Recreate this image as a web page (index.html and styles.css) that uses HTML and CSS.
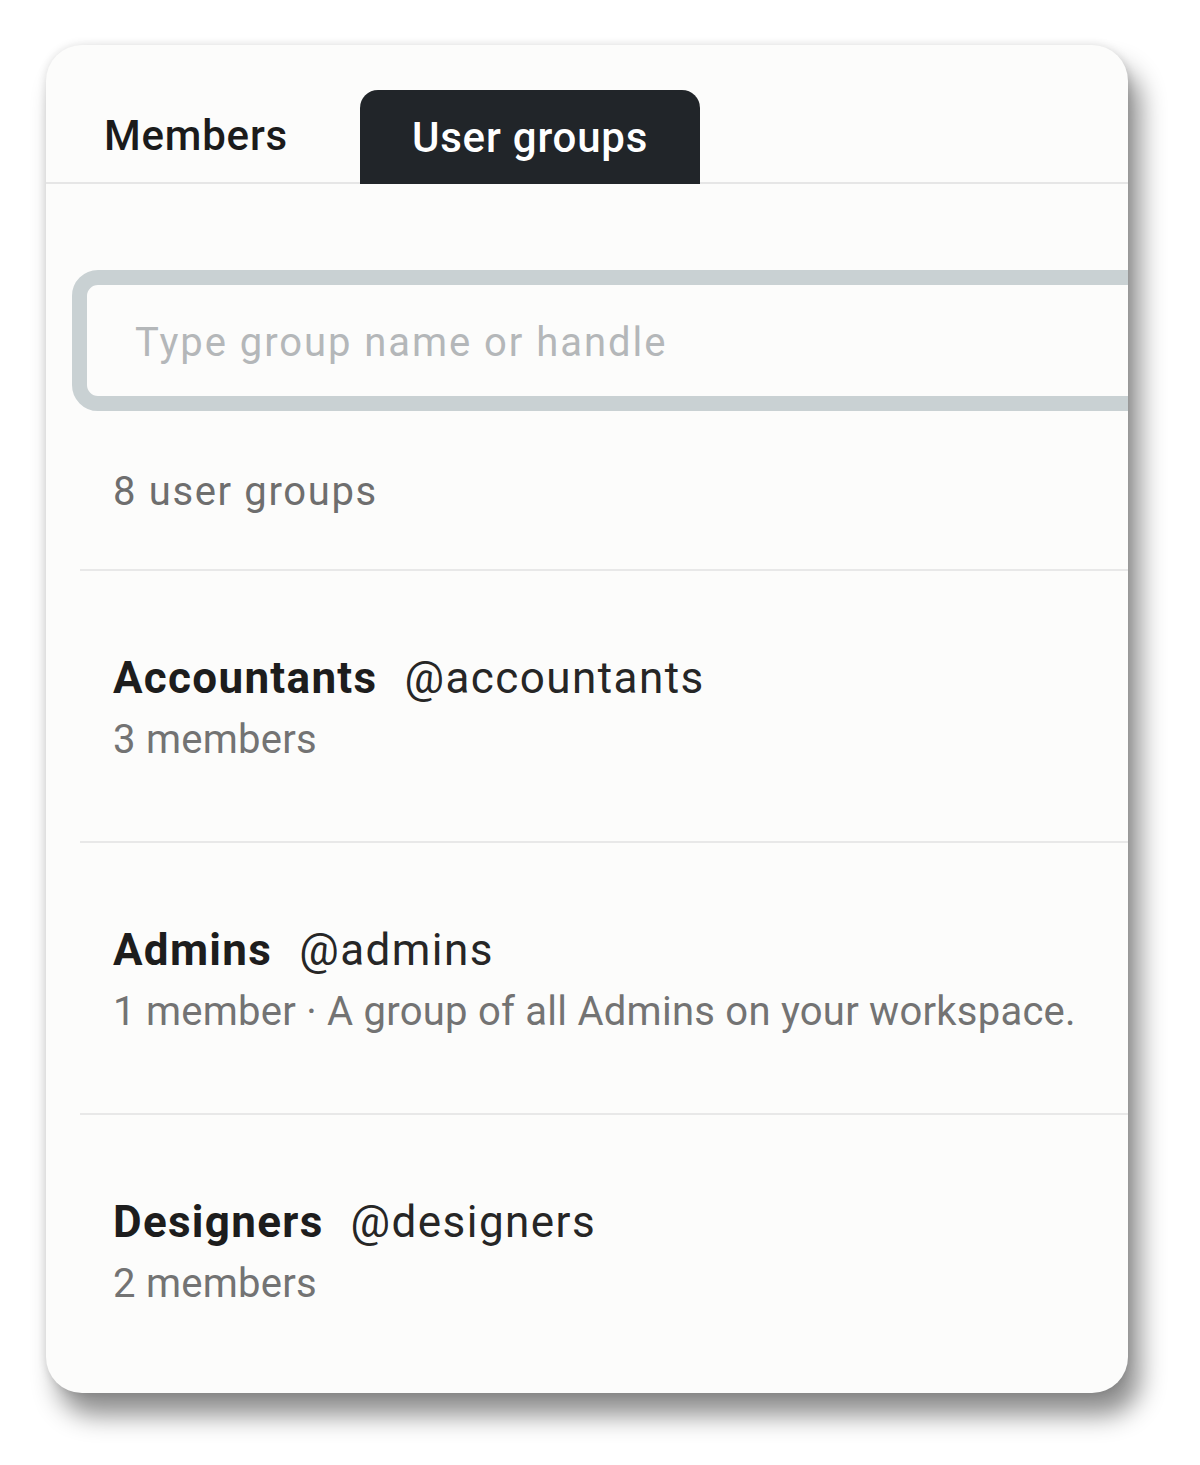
FILE: index.html
```html
<!DOCTYPE html>
<html lang="en">
<head>
<meta charset="utf-8">
<title>User groups</title>
<link rel="stylesheet" href="styles.css">
</head>
<body>
<div class="card">
  <div class="tabs">
    <div class="tab tab-plain">Members</div>
    <div class="tab tab-active">User groups</div>
  </div>
  <div class="search">
    <span class="placeholder">Type group name or handle</span>
  </div>
  <div class="count">8 user groups</div>
  <div class="list">
    <div class="item">
      <div class="title"><span class="name">Accountants</span><span class="handle">@accountants</span></div>
      <div class="sub">3 members</div>
    </div>
    <div class="item">
      <div class="title"><span class="name">Admins</span><span class="handle">@admins</span></div>
      <div class="sub">1 member · A group of all Admins on your workspace.</div>
    </div>
    <div class="item">
      <div class="title"><span class="name">Designers</span><span class="handle">@designers</span></div>
      <div class="sub">2 members</div>
    </div>
  </div>
</div>
</body>
</html>
```
FILE: styles.css
```css
html, body {
  margin: 0;
  padding: 0;
  background: #ffffff;
}
body {
  font-family: Roboto, "Liberation Sans", sans-serif;
  width: 1200px;
  height: 1465px;
  overflow: hidden;
}
.card {
  margin: 45px 0 0 46px;
  width: 1082px;
  height: 1348px;
  background: #fcfcfb;
  border-radius: 36px;
  overflow: hidden;
  box-shadow: 0 0 10px rgba(0,0,0,0.12), 12px 22px 26px rgba(0,0,0,0.45);
}
.tabs {
  display: flex;
  align-items: flex-end;
  height: 137px;
  padding-left: 58px;
  border-bottom: 2px solid #e6e6e6;
  box-sizing: content-box;
}
.tab {
  display: flex;
  align-items: center;
  font-size: 42px;
  font-weight: 500;
  letter-spacing: 0.8px;
}
.tab-plain {
  width: 256px;
  height: 94px;
  color: #1b1b1b;
}
.tab-active {
  width: 340px;
  height: 94px;
  justify-content: center;
  background: #212529;
  color: #ffffff;
  border-radius: 18px 18px 0 0;
  margin-bottom: -2px;
}
.search {
  margin: 86px 0 0 26px;
  width: 1120px;
  height: 141px;
  box-sizing: border-box;
  border: 15px solid #c9d1d3;
  border-radius: 26px;
  display: flex;
  align-items: center;
  padding-left: 48px;
}
.placeholder {
  font-size: 40px;
  letter-spacing: 1.95px;
  color: #b4b7b9;
  padding-top: 3px;
}
.count {
  margin: 57px 0 0 67px;
  font-size: 40px;
  line-height: 48px;
  letter-spacing: 1.65px;
  color: #6e6e6e;
}
.list {
  margin: 53px 0 0 34px;
}
.item {
  height: 272px;
  box-sizing: border-box;
  border-top: 2px solid #e8e8e8;
  padding: 82px 0 0 33px;
}
.title {
  font-size: 44px;
  line-height: 50px;
  color: #1d1d1d;
  white-space: nowrap;
}
.name {
  font-weight: 700;
  margin-right: 27px;
  letter-spacing: 1.3px;
}
.handle {
  font-weight: 400;
  letter-spacing: 1.45px;
  color: #262626;
}
.sub {
  margin-top: 13px;
  font-size: 40px;
  line-height: 48px;
  letter-spacing: 0.25px;
  color: #737373;
  white-space: nowrap;
}
```
